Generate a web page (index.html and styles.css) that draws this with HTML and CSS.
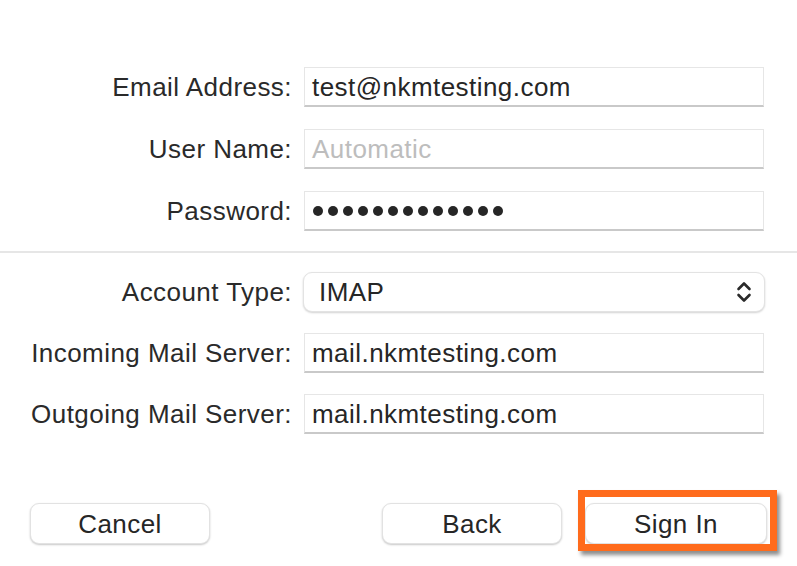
FILE: index.html
```html
<!DOCTYPE html>
<html>
<head>
<meta charset="utf-8">
<link rel="stylesheet" href="styles.css">
</head>
<body>
<div class="sheet">
  <div class="form">
    <label class="lbl">Email Address:</label>
    <div class="field">test@nkmtesting.com</div>
    <label class="lbl">User Name:</label>
    <div class="field placeholder">Automatic</div>
    <label class="lbl">Password:</label>
    <div class="field dots">
      <span class="dot"></span><span class="dot"></span><span class="dot"></span><span class="dot"></span><span class="dot"></span><span class="dot"></span><span class="dot"></span><span class="dot"></span><span class="dot"></span><span class="dot"></span><span class="dot"></span><span class="dot"></span><span class="dot"></span>
    </div>
  </div>
  <div class="sep"></div>
  <div class="form second">
    <label class="lbl">Account Type:</label>
    <div class="popup">
      <span>IMAP</span>
      <svg class="chev" width="16" height="22" viewBox="0 0 16 22"><path d="M2.5 8 L8 2.5 L13.5 8" fill="none" stroke="#2a2a2a" stroke-width="2.6" stroke-linecap="round" stroke-linejoin="round"/><path d="M2.5 14 L8 19.5 L13.5 14" fill="none" stroke="#2a2a2a" stroke-width="2.6" stroke-linecap="round" stroke-linejoin="round"/></svg>
    </div>
    <label class="lbl">Incoming Mail Server:</label>
    <div class="field">mail.nkmtesting.com</div>
    <label class="lbl">Outgoing Mail Server:</label>
    <div class="field">mail.nkmtesting.com</div>
  </div>
  <div class="footer">
    <button class="btn">Cancel</button>
    <div class="spacer"></div>
    <button class="btn">Back</button>
    <div class="highlight">
      <button class="btn sign">Sign In</button>
    </div>
  </div>
</div>
</body>
</html>
```

FILE: styles.css
```css
html, body {
  margin: 0;
  padding: 0;
  background: #ffffff;
}
body {
  font-family: "Liberation Sans", Arial, sans-serif;
  font-size: 26px;
  color: #262626;
  letter-spacing: 0.45px;
  width: 797px;
  height: 566px;
  overflow: hidden;
}
.sheet {
  padding-top: 67px;
}
.form {
  display: grid;
  grid-template-columns: 292px 460px;
  column-gap: 12px;
  row-gap: 22px;
  align-items: center;
}
.form.second {
  row-gap: 21px;
}
.lbl {
  text-align: right;
  line-height: 40px;
  white-space: nowrap;
  color: #2a2a2a;
}
.field {
  height: 40px;
  box-sizing: border-box;
  border: 1px solid #e6e6e6;
  border-bottom: 2px solid #c9c9c9;
  padding-left: 7px;
  line-height: 38px;
  color: #262626;
  background: #fff;
  white-space: nowrap;
}
.field.placeholder {
  color: #bdbdbd;
}
.field.dots {
  display: flex;
  align-items: center;
  gap: 5px;
  padding-left: 8px;
}
.dot {
  width: 10px;
  height: 10px;
  border-radius: 50%;
  background: #262626;
}
.sep {
  height: 2px;
  background: #e6e6e6;
  margin: 20px 0 19px;
}
.popup {
  margin-left: -1px;
  width: 462px;
  height: 40px;
  box-sizing: border-box;
  border: 1px solid #e3e3e3;
  border-radius: 9px;
  box-shadow: 0 1px 2px rgba(0,0,0,0.18);
  display: flex;
  align-items: center;
  justify-content: space-between;
  padding: 0 12px 0 15px;
  background: #fff;
}
.chev {
  display: block;
}
.footer {
  display: flex;
  align-items: center;
  margin-top: 69px;
  padding-left: 30px;
}
.spacer {
  width: 172px;
}
.btn {
  width: 180px;
  height: 41px;
  box-sizing: border-box;
  border: 1px solid #e2e2e2;
  border-radius: 9px;
  background: #fff;
  box-shadow: 0 1px 2px rgba(0,0,0,0.22);
  font-family: "Liberation Sans", Arial, sans-serif;
  font-size: 26px;
  letter-spacing: 0.45px;
  color: #262626;
  padding: 0;
  line-height: 38px;
}
.highlight {
  position: relative;
  margin-left: 23px;
}
.btn.sign {
  width: 182px;
  display: block;
}
.highlight::after {
  content: "";
  position: absolute;
  left: -7px;
  right: -10px;
  top: -13px;
  bottom: -7px;
  border: 7px solid #ff6b1c;
  box-shadow: 3px 4px 4px rgba(0,0,0,0.45);
  pointer-events: none;
}
```
